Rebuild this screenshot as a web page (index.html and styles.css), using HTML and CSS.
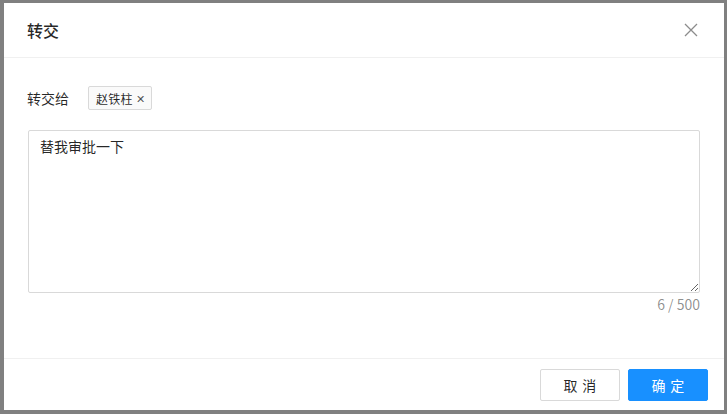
FILE: index.html
```html
<!DOCTYPE html>
<html lang="zh-CN">
<head>
<meta charset="utf-8">
<title>转交</title>
<link rel="stylesheet" href="styles.css">
</head>
<body>
<div class="modal">
  <div class="modal-header">
    <div class="modal-title">转交</div>
    <span class="modal-close" aria-label="关闭">
      <svg width="14" height="14" viewBox="0 0 14 14"><path d="M1 1 L13 13 M13 1 L1 13" stroke="#8c8c8c" stroke-width="1.3" fill="none"/></svg>
    </span>
  </div>
  <div class="modal-body">
    <div class="form-row">
      <label class="form-label">转交给</label>
      <span class="tag">赵铁柱<span class="tag-close">✕</span></span>
    </div>
    <textarea class="textarea">替我审批一下</textarea>
    <div class="count">6 / 500</div>
  </div>
  <div class="modal-footer">
    <button class="btn"><span class="btn-text">取消</span></button>
    <button class="btn btn-primary"><span class="btn-text">确定</span></button>
  </div>
</div>
</body>
</html>
```
FILE: styles.css
```css
html, body {
  margin: 0;
  padding: 0;
}
body {
  width: 727px;
  height: 414px;
  background: #808080;
  font-family: "Noto Sans CJK SC", "Liberation Sans", sans-serif;
  font-size: 14px;
  color: rgba(0, 0, 0, 0.85);
  padding: 3px 3px 0 4px;
  box-sizing: border-box;
  overflow: hidden;
}
.modal {
  width: 720px;
  height: 407px;
  background: #fff;
  display: flex;
  flex-direction: column;
}
.modal-header {
  height: 55px;
  flex: none;
  box-sizing: border-box;
  padding: 0 26px 0 24px;
  border-bottom: 1px solid #f0f0f0;
  display: flex;
  align-items: center;
  justify-content: space-between;
}
.modal-title {
  font-size: 16px;
  font-weight: 500;
  line-height: 22px;
  margin-left: -1px;
}
.modal-close {
  display: flex;
  width: 14px;
  height: 14px;
}
.modal-body {
  height: 300px;
  flex: none;
  box-sizing: border-box;
  padding: 24px 24px 0 24px;
  display: flex;
  flex-direction: column;
}
.form-row {
  height: 32px;
  display: flex;
  align-items: center;
  margin-bottom: 16px;
}
.form-label {
  width: 60px;
  font-size: 14px;
  line-height: 22px;
  margin-left: -1px;
  padding-right: 1px;
}
.tag {
  display: inline-flex;
  align-items: center;
  height: 24px;
  box-sizing: border-box;
  padding: 0 6px 0 7px;
  background: #fafafa;
  border: 1px solid #d9d9d9;
  border-radius: 2px;
  font-size: 12px;
  letter-spacing: 0.3px;
  color: rgba(0, 0, 0, 0.85);
}
.tag-close {
  font-size: 11px;
  margin-left: 3px;
  color: rgba(0, 0, 0, 0.7);
}
.textarea {
  display: block;
  width: 672px;
  height: 163px;
  box-sizing: border-box;
  margin: 0;
  padding: 4px 11px;
  border: 1px solid #d9d9d9;
  border-radius: 2px;
  font-family: "Noto Sans CJK SC", "Liberation Sans", sans-serif;
  font-size: 14px;
  line-height: 22px;
  color: rgba(0, 0, 0, 0.85);
  outline: none;
}
.count {
  width: 672px;
  text-align: right;
  line-height: 22px;
  color: rgba(0, 0, 0, 0.45);
  font-size: 14px;
}
.modal-footer {
  flex: none;
  border-top: 1px solid #f0f0f0;
  padding: 10px 16px 9px;
  display: flex;
  justify-content: flex-end;
  gap: 8px;
}
.btn {
  width: 80px;
  height: 32px;
  box-sizing: border-box;
  border: 1px solid #d9d9d9;
  border-radius: 2px;
  background: #fff;
  font-family: "Noto Sans CJK SC", "Liberation Sans", sans-serif;
  font-size: 14px;
  color: rgba(0, 0, 0, 0.85);
  padding: 0;
  cursor: pointer;
}
.btn-text {
  letter-spacing: 0.34em;
  margin-right: -0.34em;
}
.btn-primary {
  background: #1890ff;
  border-color: #1890ff;
  color: #fff;
}
```
